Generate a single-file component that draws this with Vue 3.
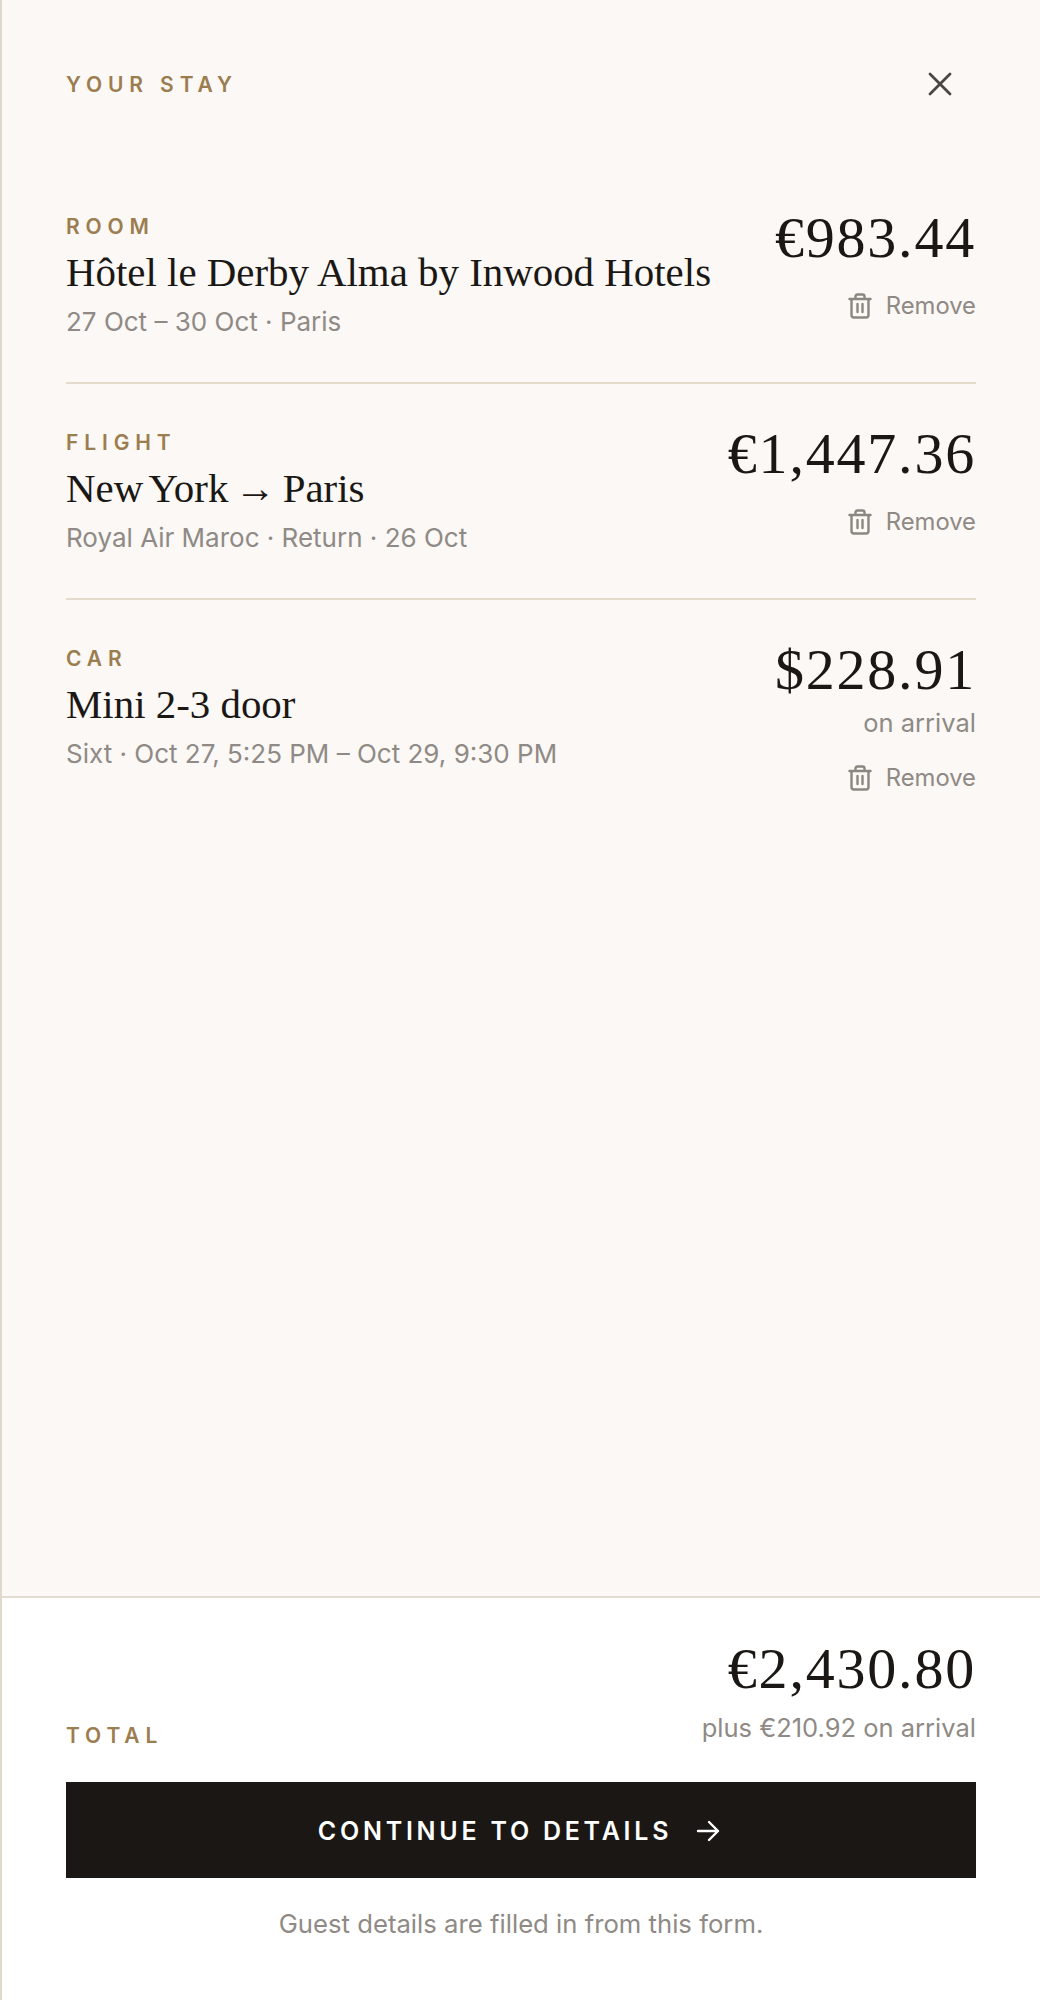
<script setup>
const items = [
  { id: 1, kind: 'Room', title: 'Hôtel le Derby Alma by Inwood Hotels', meta: '27 Oct – 30 Oct · Paris', price: '€983.44' },
  { id: 2, kind: 'Flight', title: 'New York → Paris', meta: 'Royal Air Maroc · Return · 26 Oct', price: '€1,447.36', tight: true },
  { id: 3, kind: 'Car', title: 'Mini 2-3 door', meta: 'Sixt · Oct 27, 5:25 PM – Oct 29, 9:30 PM', price: '$228.91', note: 'on arrival' }
]
</script>

<template>
  <div class="panel">
    <div class="top">
      <div class="head">
        <span class="eyebrow stay">YOUR STAY</span>
        <button class="close" aria-label="Close">
          <svg width="26" height="26" viewBox="0 0 26 26" fill="none" stroke="#4a4742" stroke-width="2.8" stroke-linecap="round">
            <path d="M3 3 L23 23 M23 3 L3 23" />
          </svg>
        </button>
      </div>
      <div class="list">
        <div v-for="item in items" :key="item.id" class="item">
          <div class="info">
            <div class="eyebrow">{{ item.kind.toUpperCase() }}</div>
            <div class="title" :class="{ tight: item.tight }">{{ item.title }}</div>
            <div class="meta">{{ item.meta }}</div>
          </div>
          <div class="side">
            <div class="price">{{ item.price }}</div>
            <div v-if="item.note" class="note">{{ item.note }}</div>
            <button class="remove">
              <svg width="24" height="26" viewBox="0 0 24 26" fill="none" stroke="#8c8680" stroke-width="2.4" stroke-linecap="round" stroke-linejoin="round">
                <path d="M1.5 6 H22.5 M7.5 6 V3.5 Q7.5 1.5 9.5 1.5 H14.5 Q16.5 1.5 16.5 3.5 V6 M3.5 6 V22 Q3.5 24.5 6 24.5 H18 Q20.5 24.5 20.5 22 V6 M9.5 11 V19 M14.5 11 V19" />
              </svg>
              <span>Remove</span>
            </button>
          </div>
        </div>
      </div>
    </div>
    <div class="footer">
      <div class="total">
        <span class="eyebrow total-label">TOTAL</span>
        <div class="sum">
          <div class="price">€2,430.80</div>
          <div class="note">plus €210.92 on arrival</div>
        </div>
      </div>
      <button class="cta">
        <span>CONTINUE TO DETAILS</span>
        <svg width="24" height="24" viewBox="0 0 24 24" fill="none" stroke="#fff" stroke-width="2.4" stroke-linecap="round" stroke-linejoin="round">
          <path d="M2 12 H22 M13 3 L22 12 L13 21" />
        </svg>
      </button>
      <p class="hint">Guest details are filled in from this form.</p>
    </div>
  </div>
</template>

<style>
html, body {
  margin: 0;
  background: #fff;
}
</style>

<style scoped>
.panel {
  box-sizing: border-box;
  width: 1040px;
  height: 2000px;
  display: flex;
  flex-direction: column;
  border-left: 2px solid #e0d8cb;
  font-family: Inter, "Liberation Sans", sans-serif;
}
.top {
  flex: 1;
  background: #fbf8f5;
  padding: 0 64px;
}
.head {
  display: flex;
  justify-content: space-between;
  align-items: center;
  height: 168px;
}
.eyebrow {
  font-size: 21px;
  line-height: 28px;
  font-weight: 600;
  letter-spacing: 0.28em;
  color: #9c7d50;
}
.stay {
  margin-top: 1px;
}
.close {
  display: flex;
  padding: 0;
  margin-right: 23px;
  background: none;
  border: 0;
}
.item {
  display: flex;
  justify-content: space-between;
  height: 216px;
  box-sizing: border-box;
  padding-top: 45px;
  border-bottom: 2px solid #e3dccb;
}
.item:last-child {
  border-bottom: 0;
}
.title {
  font-family: "Liberation Serif", serif;
  font-size: 40.9px;
  line-height: 50px;
  color: #1a1714;
  margin-top: 7px;
  white-space: nowrap;
}
.tight {
  word-spacing: -3.5px;
}
.meta {
  font-size: 26px;
  line-height: 36px;
  color: #8f8a85;
  margin-top: 6px;
}
.side {
  display: flex;
  flex-direction: column;
  align-items: flex-end;
  margin-top: -8px;
}
.price {
  font-family: "Liberation Serif", serif;
  font-size: 58px;
  line-height: 66px;
  letter-spacing: 1.8px;
  color: #1a1714;
  white-space: nowrap;
}
.note {
  font-size: 25.5px;
  line-height: 32px;
  color: #8f8a85;
  margin-top: 4px;
}
.remove {
  display: flex;
  align-items: center;
  gap: 14px;
  margin-top: 19px;
  padding: 0;
  background: none;
  border: 0;
  font-family: inherit;
  font-size: 23.8px;
  line-height: 32px;
  color: #8f8a85;
}
.note + .remove {
  margin-top: 23px;
}
.footer {
  background: #fff;
  border-top: 2px solid #e3dcd3;
  padding: 38px 64px 0;
  height: 404px;
  box-sizing: border-box;
}
.total {
  display: flex;
  justify-content: space-between;
  align-items: flex-end;
}
.total-label {
  margin-bottom: -6px;
}
.sum {
  text-align: right;
}
.sum .note {
  margin-top: 10px;
}
.cta {
  display: flex;
  align-items: center;
  justify-content: center;
  gap: 24px;
  width: 100%;
  height: 96px;
  margin-top: 38px;
  padding: 1px 4px 0 0;
  background: #1a1714;
  border: 0;
  color: #fff;
  font-family: inherit;
  font-size: 25px;
  font-weight: 600;
  letter-spacing: 0.15em;
}
.hint {
  margin: 29px 0 0;
  text-align: center;
  font-size: 25.7px;
  line-height: 34px;
  color: #8f8a85;
}
</style>
